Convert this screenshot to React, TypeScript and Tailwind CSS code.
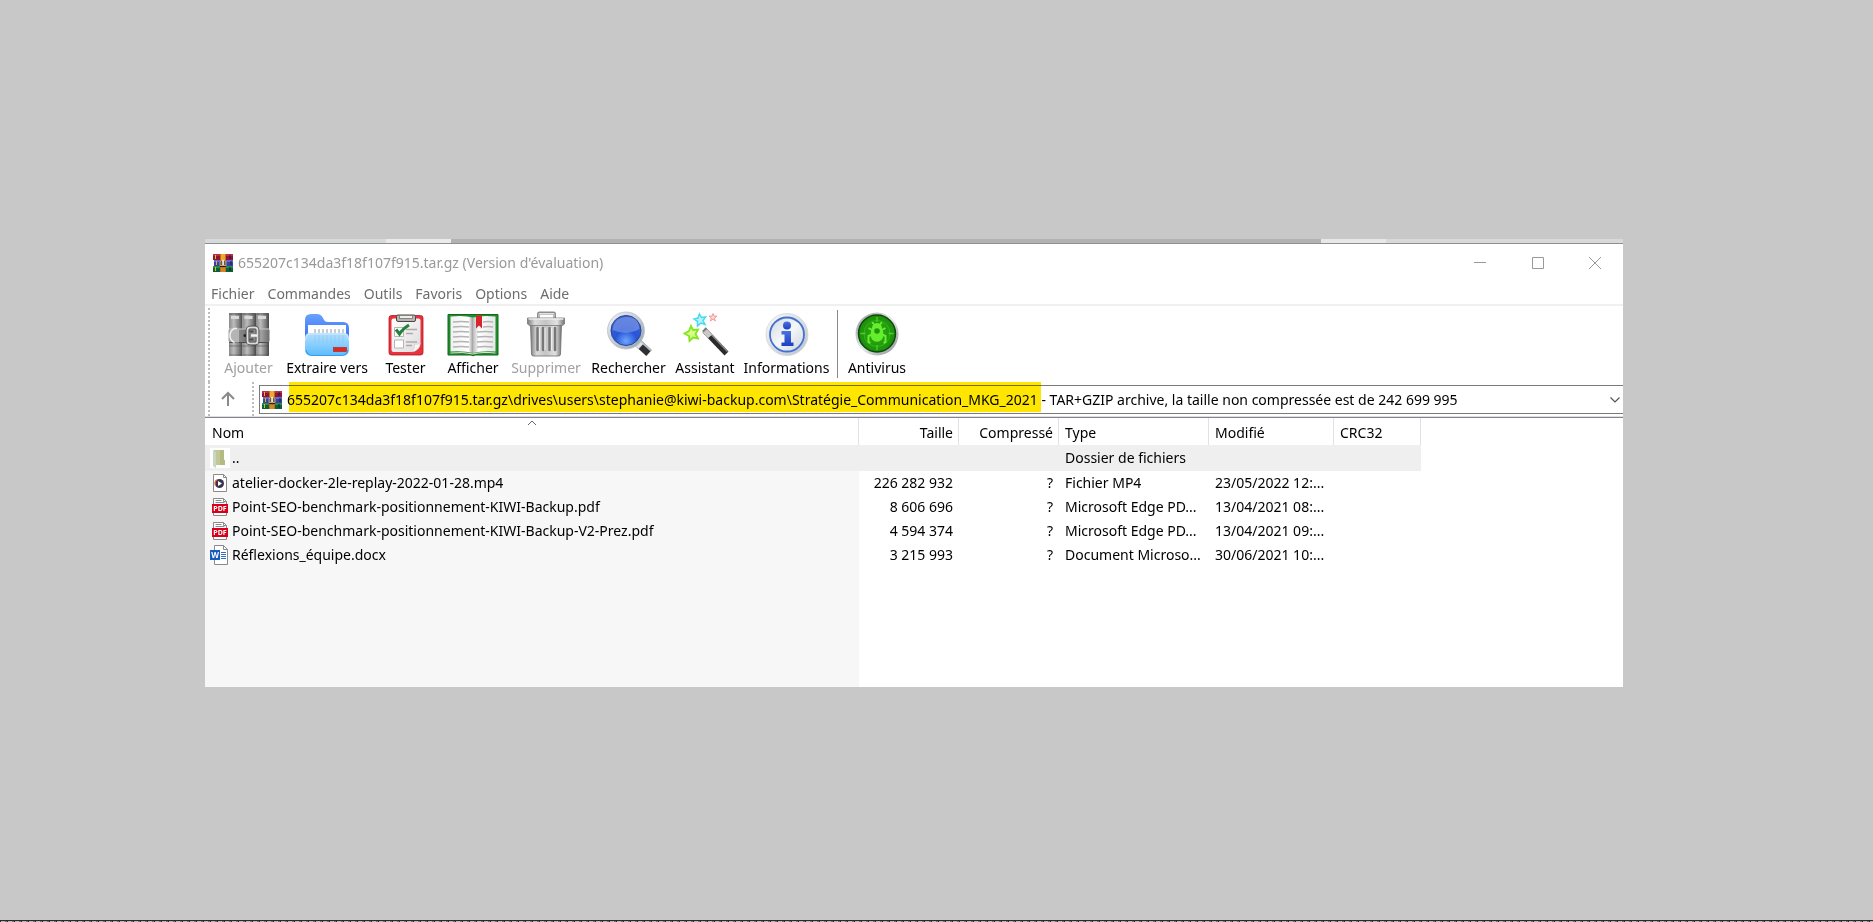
import React from "react"
import clsx from "clsx"

interface ArchiveEntry {
  name: string
  size: string
  packed: string
  type: string
  modified: string
  icon: React.ReactNode
}

interface Tool {
  label: string
  width: string
  icon: React.ReactNode
  disabled?: boolean
}

const ADDRESS =
  "655207c134da3f18f107f915.tar.gz\\drives\\users\\stephanie@kiwi-backup.com\\Stratégie_Communication_MKG_2021 - TAR+GZIP archive, la taille non compressée est de 242 699 995"

function WinrarIcon() {
  return (
    <svg className="size-5 shrink-0" viewBox="0 0 20 20" aria-hidden="true">
      <rect x="0" y="1" width="20" height="6" fill="#8f1238" />
      <rect x="0" y="1" width="20" height="2" fill="#b5304f" />
      <rect x="1" y="7" width="19" height="6" fill="#3a429f" />
      <rect x="1" y="7" width="19" height="2" fill="#5f6bd0" />
      <rect x="0" y="13" width="20" height="6" fill="#0e6135" />
      <rect x="0" y="13" width="20" height="2" fill="#218f4d" />
      <path d="M2.500 2v4M3.500 8v4M2.500 14v4" stroke="#e3b91c" />
      <path d="M17 2v4M18 8v4M17 14v4" stroke="#1c1c40" />
      <rect x="7" y="1" width="6" height="18" fill="#b8701f" />
      <rect x="8" y="1" width="4" height="7" fill="#f2a72c" />
      <path d="M7 12.500V9l1.500-1.500h3L13 9v3.500z" fill="#7a5230" stroke="#b9a68c" />
      <rect x="9.300" y="7" width="1.500" height="5" fill="#fff" />
      <path d="M7 13.500h6" stroke="#2c2118" />
      <path d="M8 16h4M8 18h4" stroke="#e9a035" />
    </svg>
  )
}

function AddIcon() {
  return (
    <svg className="size-12" viewBox="0 0 48 48" aria-hidden="true">
      <defs>
        <linearGradient id="add-book">
          <stop offset="0" stopColor="#8b8b8b" />
          <stop offset=".35" stopColor="#bcbcbc" />
          <stop offset=".75" stopColor="#7d7d7d" />
          <stop offset="1" stopColor="#474747" />
        </linearGradient>
        <linearGradient id="add-belt">
          <stop offset="0" stopColor="#a5a5a5" />
          <stop offset=".5" stopColor="#6f6f6f" />
          <stop offset=".8" stopColor="#a0a0a0" />
          <stop offset="1" stopColor="#6b6b6b" />
        </linearGradient>
      </defs>
      <rect x="4" y="3" width="13.500" height="43" rx="1" fill="url(#add-book)" />
      <rect x="17.500" y="3" width="13.500" height="43" rx="1" fill="url(#add-book)" />
      <rect x="31" y="3" width="13" height="43" rx="1" fill="url(#add-book)" />
      <path d="M4 4h40" stroke="#4c4c4c" strokeWidth="1.500" opacity=".6" />
      <path d="M6 7.500h8M19.500 7.500h8M33 7.500h8" stroke="#d9d9d9" strokeWidth="3" />
      <path d="M4 36h40M4 45h40" stroke="#444" opacity=".5" />
      <rect x="3.500" y="18.500" width="41" height="14" rx="2" fill="url(#add-belt)" />
      <path d="M4 19h40" stroke="#c9c9c9" />
      <path d="M4 32.500h40" stroke="#4d4d4d" />
      <path d="M14 18.500H9.500Q5 20.500 5 25.500t4.500 7H14z" fill="#b4b4b4" />
      <path d="M12 18.500H9.500Q5 20.500 5 25.500t4.500 7" fill="none" stroke="#f0f0f0" strokeWidth="1.500" />
      <circle cx="20" cy="25.500" r="1.500" fill="#222" />
      <rect x="22.500" y="17.500" width="10" height="16" rx="2.500" fill="#8a8a8a" stroke="#3b3b3b" strokeWidth="3.500" />
      <rect x="22.500" y="17.500" width="10" height="16" rx="2.500" fill="none" stroke="#dcdcdc" strokeWidth="2" />
      <path d="M26 25.500h6" stroke="#f0f0f0" strokeWidth="2.500" />
      <path d="M24.500 21.500h4M24.500 29.500h4" stroke="#4c4c4c" strokeWidth="2" />
    </svg>
  )
}

function ExtractIcon() {
  return (
    <svg className="size-12" viewBox="0 0 48 48" aria-hidden="true">
      <defs>
        <linearGradient id="ext-back" x2="0" y2="1">
          <stop offset="0" stopColor="#6aa2ff" />
          <stop offset="1" stopColor="#2d62f0" />
        </linearGradient>
        <linearGradient id="ext-front" x2="0" y2="1">
          <stop offset="0" stopColor="#b4e0ff" />
          <stop offset="1" stopColor="#5bbcfd" />
        </linearGradient>
      </defs>
      <path d="M2 10q0-6 6-6h6q4 0 6 4l1 2q1 2 4 2h15q6 0 6 6v16H2z" fill="url(#ext-back)" />
      <path d="M5 15h38v12H5z" fill="#fff" />
      <path d="M12 19v4M16 19v4M20 19v4M24 19v4M28 19v4M32 19v4M36 19v4M40 19v4" stroke="#b7bcc9" strokeWidth="1.500" />
      <path d="M2 28q0-5 5-5h34q5 0 5 5v11q0 7-7 7H9q-7 0-7-7z" fill="url(#ext-front)" />
      <path d="M2.500 30q0-6 5-6h33q5 0 5 6" fill="none" stroke="#d5efff" opacity=".8" />
      <path d="M12 25v8M16 25v8M20 25v8M24 25v8M28 25v8M32 25v8M36 25v8M40 25v8" stroke="#8ab9e4" opacity=".4" />
      <path d="M3 40q1 5.500 7 5.500h28q6 0 7-5.500" fill="none" stroke="#3a9cec" strokeWidth="1.200" />
      <rect x="30.500" y="37.500" width="13" height="4" fill="#e3281b" stroke="#b51d17" strokeWidth=".6" />
    </svg>
  )
}

function TestIcon() {
  return (
    <svg className="size-12" viewBox="0 0 48 48" aria-hidden="true">
      <defs>
        <linearGradient id="test-page" x2="1" y2="1">
          <stop offset="0" stopColor="#fff" />
          <stop offset="1" stopColor="#dcdcdc" />
        </linearGradient>
      </defs>
      <rect x="7" y="5.500" width="34" height="39.500" rx="2.500" fill="#e8333c" stroke="#b5151f" strokeWidth=".8" />
      <path d="M9.500 10.500q0-2 2-2h25q2 0 2 2V33q-1 8-9 9h-18q-2 0-2-2z" fill="url(#test-page)" />
      <path d="M38.500 33q-1 8-9 9 4-4 3-8 3 1 6-1z" fill="#f7f7f7" stroke="#c5c5c5" strokeWidth=".5" />
      <rect x="14.500" y="5" width="19" height="6.500" rx="1.500" fill="#b9b4b4" stroke="#4f4545" />
      <rect x="17.500" y="5.500" width="13" height="3" fill="#eee" stroke="#776" strokeWidth=".8" />
      <path d="M12.500 17.500h9v9h-9zM12.500 30h9v8h-9z" fill="#fff" stroke="#b5b5b5" />
      <path d="M24 19.500h11M24 23.500h7M24 32h11M24 35.500h6" stroke="#b1a9a9" strokeWidth="1.300" />
      <path d="M14 19.500l3.500 4.500q3-5 9.500-9" fill="none" stroke="#22823a" strokeWidth="3" />
    </svg>
  )
}

function ViewIcon() {
  return (
    <svg className="h-12 w-[52px]" viewBox="0 0 52 48" aria-hidden="true">
      <defs>
        <linearGradient id="view-left">
          <stop offset="0" stopColor="#f0f0f0" />
          <stop offset=".8" stopColor="#fff" />
          <stop offset="1" stopColor="#9c9c9c" />
        </linearGradient>
        <linearGradient id="view-right">
          <stop offset="0" stopColor="#b9b9b9" />
          <stop offset=".25" stopColor="#fff" />
          <stop offset="1" stopColor="#e6e6e6" />
        </linearGradient>
      </defs>
      <path d="M1 4.500h50V45H28l-2 .8-2-.8H1z" fill="#1f8d2a" stroke="#12671b" />
      <path d="M3.500 6.500Q17 5 26 7.500V43q-9-2.500-22.500-1.500z" fill="url(#view-left)" />
      <path d="M48.500 6.500Q35 5 26 7.500V43q9-2.500 22.500-1.500z" fill="url(#view-right)" />
      <path
        d="M6 12q8-1 16 0M6 17q8-1 16 0M6 22q8-1 16 0M6 27q8-1 16 0M6 32q8-1 16 0M6 37q8-1 16 0M36 12q5-1 10 0M36 17q5-1 10 0M30 22q8-1 16 0M30 27q8-1 16 0M30 32q8-1 16 0M30 37q8-1 16 0"
        fill="none"
        stroke="#b4b4b4"
        strokeWidth="1.300"
      />
      <path d="M3.500 43q13-1.500 22.500 1 9-2.500 22.500-1" fill="none" stroke="#dedede" />
      <path d="M29 5.500h6v13l-3-3-3 3z" fill="#d9252a" />
    </svg>
  )
}

function DeleteIcon() {
  return (
    <svg className="size-12" viewBox="0 0 48 48" aria-hidden="true">
      <defs>
        <linearGradient id="del-body">
          <stop offset="0" stopColor="#7c7c7c" />
          <stop offset=".2" stopColor="#dadada" />
          <stop offset=".5" stopColor="#c4c4c4" />
          <stop offset=".8" stopColor="#e2e2e2" />
          <stop offset="1" stopColor="#737373" />
        </linearGradient>
      </defs>
      <path d="M16.500 8V4q0-1 1-1h14q1 0 1 1v4" fill="none" stroke="#8d8d8d" strokeWidth="3" />
      <path d="M17 8V3.500h15V8" fill="none" stroke="#e2e2e2" />
      <path d="M8.500 14h31l-1 30q0 2-2 2h-25q-2 0-2-2z" fill="url(#del-body)" stroke="#6c6c6c" strokeWidth=".8" />
      <path d="M15.500 18v22M21 18v22M27.500 18v22M33 18v22" stroke="#777" strokeWidth="2.500" strokeLinecap="round" />
      <path d="M17.500 18v22M23 18v22M29.500 18v22" stroke="#efefef" />
      <path d="M5.500 8h37v6l-2 1.500h-33l-2-1.500z" fill="url(#del-body)" stroke="#777" strokeWidth=".8" />
      <path d="M6.500 9h35" stroke="#ededed" strokeWidth="1.500" />
    </svg>
  )
}

function FindIcon() {
  return (
    <svg className="size-12" viewBox="0 0 48 48" aria-hidden="true">
      <defs>
        <radialGradient id="find-lens" cx=".5" cy=".85" r=".8">
          <stop offset="0" stopColor="#6fa5ff" />
          <stop offset=".45" stopColor="#2855d6" />
          <stop offset="1" stopColor="#3d62cf" />
        </radialGradient>
        <linearGradient id="find-rim" x2="1" y2="1">
          <stop offset="0" stopColor="#f2f4f6" />
          <stop offset="1" stopColor="#93a1ab" />
        </linearGradient>
      </defs>
      <path d="M33 33l11 10" stroke="#2d3136" strokeWidth="8" />
      <path d="M35 30.500l11 10" stroke="#b8bec3" strokeWidth="2" />
      <path d="M31 32l5 4.500" stroke="#dde1e4" strokeWidth="7" />
      <circle cx="21" cy="20.500" r="18.500" fill="url(#find-rim)" stroke="#b4c0c8" strokeWidth=".8" />
      <circle cx="21" cy="20.500" r="15" fill="url(#find-lens)" stroke="#26439d" />
      <path d="M7.500 20q1-12 13.500-13t13.500 12q-13 7-27 1z" fill="#a9bff5" opacity=".4" />
    </svg>
  )
}

function WizardIcon() {
  return (
    <svg className="size-12" viewBox="0 0 48 48" aria-hidden="true">
      <path
        d="M10 16l2 4 5-.5-2.500 4.500 2.500 4.500-5-1-3.500 3.500-.5-5-4.500-2.500L8 21z"
        fill="#d4ff8a"
        stroke="#86e61e"
        strokeWidth="1.800"
      />
      <path
        d="M18.500 4l2 3.500 4-.500-2.500 3.500 2 4-4-1.500-3.500 3v-4.500L13 9l4-1z"
        fill="#b9f4ff"
        stroke="#46d9f2"
        strokeWidth="1.500"
      />
      <path d="M32 3.500l1 2.500 3 .2-2.500 1.800.8 3-2.300-1.800-2.600 1.800 1-3-2.400-1.800 3-.2z" fill="#ffd5d5" stroke="#f39a9a" />
      <path d="M23.500 20.500l22 23" stroke="#2b2b2b" strokeWidth="5.500" />
      <path d="M25.500 19.500l21 22" stroke="#8b8b8b" strokeWidth="1.500" />
      <path d="M23 20l6 6.500" stroke="#c9c9c9" strokeWidth="5.500" />
      <path d="M22 21.500l3.500-3.500" stroke="#777" strokeWidth="2" />
    </svg>
  )
}

function InfoIcon() {
  return (
    <svg className="size-12" viewBox="0 0 48 48" aria-hidden="true">
      <defs>
        <linearGradient id="info-rim" x2="1" y2="1">
          <stop offset="0" stopColor="#fafbfc" />
          <stop offset="1" stopColor="#b9c2cb" />
        </linearGradient>
        <linearGradient id="info-face" x2="1" y2="1">
          <stop offset="0" stopColor="#d3dae2" />
          <stop offset=".5" stopColor="#f5f7f9" />
          <stop offset="1" stopColor="#ccd4dd" />
        </linearGradient>
        <linearGradient id="info-ink" x2="0" y2="1">
          <stop offset="0" stopColor="#4a74e0" />
          <stop offset="1" stopColor="#1c3fc0" />
        </linearGradient>
      </defs>
      <circle cx="24" cy="24.500" r="21" fill="url(#info-rim)" stroke="#cfd6dc" strokeWidth=".8" />
      <circle cx="24" cy="24.500" r="17" fill="url(#info-face)" stroke="#4471cf" strokeWidth="1.800" />
      <circle cx="24" cy="15.500" r="4" fill="url(#info-ink)" />
      <path d="M18.500 21h9.500v11.500h2.500V36h-12v-3.500h3V24.500h-3z" fill="url(#info-ink)" />
    </svg>
  )
}

function AntivirusIcon() {
  return (
    <svg className="size-12" viewBox="0 0 48 48" aria-hidden="true">
      <defs>
        <linearGradient id="av-rim" x2="1" y2="1">
          <stop offset="0" stopColor="#8f9499" />
          <stop offset=".5" stopColor="#e8eaee" />
          <stop offset="1" stopColor="#84888f" />
        </linearGradient>
        <radialGradient id="av-face">
          <stop offset="0" stopColor="#2fae12" />
          <stop offset="1" stopColor="#1c8f0c" />
        </radialGradient>
      </defs>
      <circle cx="24" cy="24" r="21.500" fill="url(#av-rim)" />
      <circle cx="24" cy="23.500" r="18.500" fill="url(#av-face)" stroke="#0b4a0a" strokeWidth="1.500" />
      <circle cx="24" cy="23.500" r="13" fill="none" stroke="#3cbb1f" strokeWidth=".8" />
      <path d="M24 7v5M24 35v5M7.500 23.500h5M35.500 23.500h5" stroke="#4cd026" strokeWidth="1.300" />
      <path d="M20 14.500q4-3 8 0l1.500 5q2 6-.5 10-5 4.500-10 0-2.500-4-.5-10z" fill="#66ee2c" />
      <circle cx="24" cy="21" r="2.800" fill="#23940f" />
      <path
        d="M20 20.500l-4.500-2.500M28 20.500l4.500-2.500M19 24.500l-3.500 1.500v6l2 1M29 24.500l3.500 1.500v6l-2 1M21 14l-2-1.500M27 14l2-1.500"
        fill="none"
        stroke="#66ee2c"
        strokeWidth="2"
      />
    </svg>
  )
}

function FolderIcon() {
  return (
    <svg className="size-5" viewBox="0 0 20 20" aria-hidden="true">
      <rect width="20" height="20" fill="#fff" />
      <path d="M4 2h10v10l1 .5V17H6L4 15z" fill="#c3c795" />
      <path d="M10 2h4v10l1 .5V17h-5z" fill="#b4ba84" />
      <path d="M3 2l3 2v16l-3-2z" fill="#c9d6c2" />
    </svg>
  )
}

function VideoIcon() {
  return (
    <svg className="size-5" viewBox="0 0 20 20" aria-hidden="true">
      <path d="M3.500 1.500h10l3 3v14h-13z" fill="#fff" stroke="#8a8a8a" />
      <path d="M13.500 1.500v3h3" fill="none" stroke="#8a8a8a" />
      <circle cx="9.500" cy="10.500" r="4.500" fill="#3a3350" />
      <path d="M5.500 12.500a4.500 4.500 0 0 1 2-6" fill="none" stroke="#e8642c" strokeWidth="1.400" />
      <path d="M8 8l4 2.500L8 13z" fill="#fff" />
    </svg>
  )
}

function PdfIcon() {
  return (
    <svg className="size-5" viewBox="0 0 20 20" aria-hidden="true">
      <path d="M3.500 1.500h10l3 3v14h-13z" fill="#fff" stroke="#8a8a8a" />
      <path d="M13.500 1.500v3h3M5.500 3.500h6M5.500 5.500h9" fill="none" stroke="#8a8a8a" />
      <rect x="2" y="7" width="16" height="9" fill="#d8001b" />
      <text x="10" y="14" textAnchor="middle" fontSize="7" fontWeight="700" fill="#fff">
        PDF
      </text>
    </svg>
  )
}

function WordIcon() {
  return (
    <svg className="size-5" viewBox="0 0 20 20" aria-hidden="true">
      <path d="M4.500.5h9l4 4v15h-13z" fill="#fff" stroke="#8a8a8a" />
      <path d="M13.500.5v4h4" fill="none" stroke="#8a8a8a" />
      <path d="M11 7.500h5M11 9.500h5M11 11.500h5M11 13.500h5" stroke="#2f6ec4" />
      <rect x="0" y="5" width="10" height="10" fill="#185abd" />
      <text x="5" y="13" textAnchor="middle" fontSize="8" fontWeight="700" fill="#fff">
        W
      </text>
    </svg>
  )
}

const tools: Tool[] = [
  { label: "Ajouter", width: "w-[63px]", icon: <AddIcon />, disabled: true },
  { label: "Extraire vers", width: "w-[94px]", icon: <ExtractIcon /> },
  { label: "Tester", width: "w-[63px]", icon: <TestIcon /> },
  { label: "Afficher", width: "w-[72px]", icon: <ViewIcon /> },
  { label: "Supprimer", width: "w-[74px]", icon: <DeleteIcon />, disabled: true },
  { label: "Rechercher", width: "w-[91px]", icon: <FindIcon /> },
  { label: "Assistant", width: "w-[62px]", icon: <WizardIcon /> },
  { label: "Informations", width: "w-[101px]", icon: <InfoIcon /> },
]

const entries: ArchiveEntry[] = [
  { name: "..", size: "", packed: "", type: "Dossier de fichiers", modified: "", icon: <FolderIcon /> },
  { name: "atelier-docker-2le-replay-2022-01-28.mp4", size: "226 282 932", packed: "?", type: "Fichier MP4", modified: "23/05/2022 12:...", icon: <VideoIcon /> },
  { name: "Point-SEO-benchmark-positionnement-KIWI-Backup.pdf", size: "8 606 696", packed: "?", type: "Microsoft Edge PD...", modified: "13/04/2021 08:...", icon: <PdfIcon /> },
  { name: "Point-SEO-benchmark-positionnement-KIWI-Backup-V2-Prez.pdf", size: "4 594 374", packed: "?", type: "Microsoft Edge PD...", modified: "13/04/2021 09:...", icon: <PdfIcon /> },
  { name: "Réflexions_équipe.docx", size: "3 215 993", packed: "?", type: "Document Microso...", modified: "30/06/2021 10:...", icon: <WordIcon /> },
]

function ToolButton({ label, width, icon, disabled }: Tool) {
  return (
    <button
      type="button"
      disabled={disabled}
      className={clsx("flex shrink-0 flex-col items-center whitespace-nowrap", width, disabled ? "text-[#a0a0a0]" : "text-black")}
    >
      {icon}
      <span className="leading-5">{label}</span>
    </button>
  )
}

function Grip() {
  return (
    <div className="w-0.5 shrink-0 self-stretch bg-[repeating-linear-gradient(to_bottom,#bdbdbd_0_2px,transparent_2px_4px)]" />
  )
}

function TitleBar() {
  return (
    <header className="flex h-[37px] items-center pl-2 text-[#999]">
      <WinrarIcon />
      <h1 className="ml-[5px] flex-1">655207c134da3f18f107f915.tar.gz (Version d'évaluation)</h1>
      <button type="button" aria-label="Réduire" className="flex h-full w-[58px] items-center justify-center">
        <svg className="size-3" viewBox="0 0 12 12"><path d="M0 5.500h12" stroke="#999" /></svg>
      </button>
      <button type="button" aria-label="Agrandir" className="flex h-full w-[58px] items-center justify-center">
        <svg className="size-3" viewBox="0 0 12 12"><path d="M.5.5h11v11H.5z" fill="none" stroke="#999" /></svg>
      </button>
      <button type="button" aria-label="Fermer" className="flex h-full w-14 items-center justify-center">
        <svg className="size-3" viewBox="0 0 12 12"><path d="M0 0l12 12M12 0L0 12" stroke="#999" /></svg>
      </button>
    </header>
  )
}

function AddressBar() {
  return (
    <div className="flex h-[34px] pl-[3px]">
      <Grip />
      <button type="button" aria-label="Dossier parent" className="flex w-9 items-center justify-center">
        <svg className="size-4" viewBox="0 0 16 16"><path d="M8 15V2M2 8l6-6 6 6" fill="none" stroke="#8a8a8a" strokeWidth="2" /></svg>
      </button>
      <div className="ml-1.5 flex">
        <Grip />
      </div>
      <div className="relative mt-[3px] ml-[5px] flex h-[29px] flex-1 items-center border border-r-0 border-[#7a7a7a] pl-0.5">
        <WinrarIcon />
        <input
          type="text"
          aria-label="Adresse"
          readOnly
          value={ADDRESS}
          className="ml-[5px] min-w-0 flex-1 bg-transparent text-black outline-none"
        />
        <button type="button" aria-label="Afficher la liste" className="flex h-full w-4 items-center justify-center">
          <svg className="h-3 w-2.5" viewBox="0 0 10 12"><path d="M.5 3.500L5 8l4.500-4.500" fill="none" stroke="#555" strokeWidth="1.200" /></svg>
        </button>
        {/* marker stroke over the path */}
        <div className="pointer-events-none absolute -top-1 left-[29px] h-[30px] w-[752px] bg-[#ffe600] mix-blend-multiply" />
      </div>
    </div>
  )
}

const headCell = "border-r border-[#e2e2e2] pt-0.5 font-normal"

function FileList() {
  return (
    <section className="border-t border-[#85858f]">
      <table className="w-[1216px] table-fixed border-separate border-spacing-0 whitespace-nowrap">
        <colgroup>
          <col className="w-[654px]" />
          <col className="w-[100px]" />
          <col className="w-[100px]" />
          <col className="w-[150px]" />
          <col className="w-[125px]" />
          <col />
        </colgroup>
        <thead>
          <tr className="h-[27px]">
            <th className={clsx(headCell, "relative pl-[7px] text-left")}>
              Nom
              <svg className="absolute top-0.5 left-1/2 h-1.5 w-2.5 -translate-x-1/2" viewBox="0 0 10 6"><path d="M1 5l4-4 4 4" fill="none" stroke="#666" /></svg>
            </th>
            <th className={clsx(headCell, "pr-[5px] text-right")}>Taille</th>
            <th className={clsx(headCell, "pr-[5px] text-right")}>Compressé</th>
            <th className={clsx(headCell, "pl-1.5 text-left")}>Type</th>
            <th className={clsx(headCell, "pl-1.5 text-left")}>Modifié</th>
            <th className={clsx(headCell, "pl-1.5 text-left")}>CRC32</th>
          </tr>
        </thead>
        <tbody>
          {entries.map((entry, i) => (
            <tr key={entry.name} className={i === 0 ? "h-[26px] bg-[#efefef]" : "h-6"}>
              <td className={clsx("pl-[5px]", i > 0 && "bg-[#f7f7f7]")}>
                <div className="flex items-center gap-0.5">
                  {entry.icon}
                  {entry.name}
                </div>
              </td>
              <td className="pr-1.5 text-right">{entry.size}</td>
              <td className="pr-1.5 text-right">{entry.packed}</td>
              <td className="pl-1.5">{entry.type}</td>
              <td className="pl-1.5">{entry.modified}</td>
              <td />
            </tr>
          ))}
        </tbody>
      </table>
      <div className="h-[120px] w-[654px] bg-[#f7f7f7]" />
    </section>
  )
}

export default function App() {
  return (
    <div className="flex min-h-screen flex-col bg-[#c8c8c8] font-['Noto_Sans','Open_Sans',sans-serif] text-sm leading-5 text-black">
      <main className="pt-[239px] pr-[250px] pl-[205px]">
        <div className="flex h-[5px] border-b border-[#8f8f8f]">
          <div className="w-[181px] bg-[#d6dadb]" />
          <div className="w-[65px] bg-[#ebebeb]" />
          <div className="flex-1 bg-[#b2b2b2]" />
          <div className="w-[65px] bg-[#e8e8e8]" />
          <div className="w-[237px] bg-[#d9d9d9]" />
        </div>
        <div className="overflow-hidden bg-white">
          <TitleBar />
          <nav className="flex h-[25px] gap-[13px] border-b-2 border-[#f0f0f0] pt-0.5 pl-1.5 text-[#6d6d6d]">
            {["Fichier", "Commandes", "Outils", "Favoris", "Options", "Aide"].map(item => (
              <button key={item} type="button">{item}</button>
            ))}
          </nav>
          <div className="flex h-[76px] pt-0.5 pl-[3px]">
            <Grip />
            <div className="flex items-start pt-0.5 pl-[7px]">
              {tools.map(tool => <ToolButton key={tool.label} {...tool} />)}
              <div className="h-[68px] w-px bg-[#8a8a8a]" />
              <ToolButton label="Antivirus" width="w-[78px]" icon={<AntivirusIcon />} />
            </div>
          </div>
          <AddressBar />
          <div className="h-px bg-[#dedede]" />
          <FileList />
        </div>
      </main>
      <footer className="mt-auto h-0.5 border-t border-[#2b2b2b] bg-[repeating-linear-gradient(to_right,#2b2b2b_0_1px,#b5b5b5_1px_5px,#777_5px_7px)]" />
    </div>
  )
}
